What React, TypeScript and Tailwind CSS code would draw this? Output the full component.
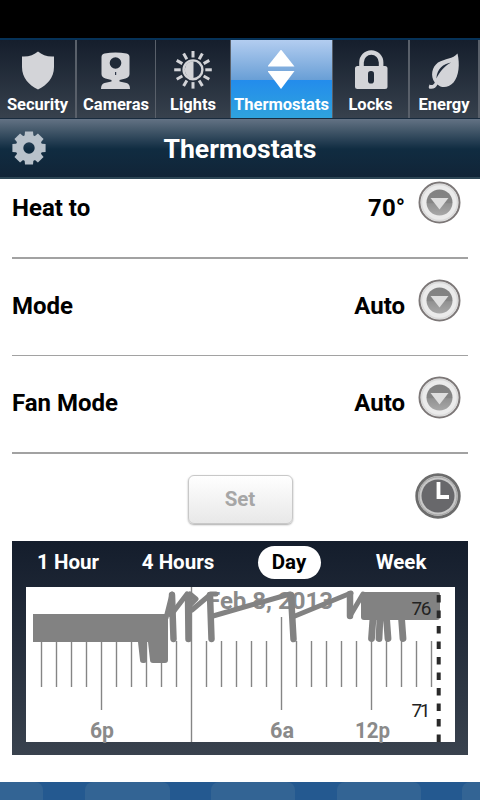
import React from 'react';
import { clsx } from 'clsx';

const ShieldIcon = () => (
  <svg width="34" height="40" viewBox="20 50 34 40" fill="#d3d4d8">
    <path d="M37 51.5C41 55 46.500 57 53 56.500V67C53 78 46 85 37 89.500C28 85 21 78 21 67V56.500C27.500 57 33 55 37 51.500Z" />
  </svg>
);

const CameraIcon = () => (
  <svg width="32" height="40" viewBox="99.500 50 32 40">
    <path d="M104 53.500Q115 51.500 126 53.500Q129 54 129 57V74Q129 77 125 78.500L119 80V81.500L126 83Q129.500 84 129.500 89H100.500Q100.500 84 104 83L111 81.500V80L105 78.500Q101 77 101 74V57Q101 54 104 53.500Z" fill="#d3d4d8" />
    <circle cx="115" cy="63" r="5.800" fill="#202a38" />
    <rect x="114.500" y="72" width="1.200" height="3" fill="#30394a" />
  </svg>
);

const rays = [0, 30, 60, 90, 120, 150, 180, 210, 240, 270, 300, 330];

const LightIcon = () => (
  <svg width="38" height="40" viewBox="174 50 38 40">
    {rays.map((r) => (
      <path key={r} d="M193 51V57.500" stroke="#d3d4d8" strokeWidth="3" transform={`rotate(${r} 193 69.800)`} />
    ))}
    <circle cx="193" cy="69.800" r="9.400" fill="#263142" stroke="#d3d4d8" strokeWidth="2.400" />
    <path d="M193.500 61V78.600A8.800 8.800 0 0 1 193.500 61Z" fill="#d3d4d8" />
  </svg>
);

const ArrowsIcon = () => (
  <svg width="28" height="40" viewBox="267.500 50 28 40" fill="#fff">
    <path d="M280.500 49.500L294 66.500H267Z" />
    <path d="M267 71H294L280.500 89Z" />
  </svg>
);

const LockIcon = () => (
  <svg width="34" height="40" viewBox="354 50 34 40">
    <path d="M361.500 68V62.500A9.800 10 0 0 1 381.100 62.500V68" fill="none" stroke="#d3d4d8" strokeWidth="4.600" />
    <rect x="355" y="66" width="32.500" height="23" rx="2.500" fill="#d3d4d8" />
    <rect x="368" y="71" width="6" height="12.500" rx="2.800" fill="#202a38" />
  </svg>
);

const LeafIcon = () => (
  <svg width="32" height="40" viewBox="428 50 32 40">
    <path d="M457.500 53.500C460 64 459 76 453.500 82.500C448 88.500 441 88 437.500 84.500C436 88 433 89.500 429 88.500Q428.500 86.500 429.500 84.500C432 86 434 84.500 434.800 82.500C430 76 432 67 438 62.500C445 58.500 453 59 457.500 53.500Z" fill="#d3d4d8" />
    <path d="M451 62.500C443 64 437.500 68 436.300 78.500C439 73 444 66 451 62.500Z" fill="#232e3e" />
  </svg>
);

const teeth = [0, 45, 90, 135, 180, 225, 270, 315];

const GearIcon = () => (
  <svg width="34" height="34" viewBox="-17 -17 34 34">
    {teeth.map((r) => (
      <path key={r} d="M-4.600 -10L-4 -16.600H4L4.600 -10Z" fill="#b9c2cb" transform={`rotate(${r})`} />
    ))}
    <circle r="9.500" fill="none" stroke="#b9c2cb" strokeWidth="7.600" />
  </svg>
);

const DropButton = () => (
  <svg width="43" height="43" viewBox="-21.500 -21.500 43 43">
    <defs>
      <linearGradient id="drop" x1="0" y1="0" x2="0" y2="1">
        <stop offset="0" stopColor="#818181" />
        <stop offset="0.500" stopColor="#858585" />
        <stop offset="0.550" stopColor="#929292" />
        <stop offset="1" stopColor="#a8a8a8" />
      </linearGradient>
    </defs>
    <circle r="20" fill="#ebebeb" stroke="#7c7777" strokeWidth="2" />
    <circle r="18" fill="none" stroke="#dadada" strokeWidth="1.500" />
    <circle r="13" fill="url(#drop)" />
    <path d="M-9 -4.500H9L0 7Z" fill="#dedede" />
  </svg>
);

const ClockIcon = () => (
  <svg width="46" height="46" viewBox="-23 -23 46 46">
    <circle r="21.300" fill="#c9c9c9" stroke="#6c6c6c" strokeWidth="2.800" />
    <circle r="19" fill="none" stroke="#a4a4a4" strokeWidth="1" />
    <circle r="16.500" fill="#68686b" />
    <path d="M0.500 -14V1H11" fill="none" stroke="#fff" strokeWidth="3.800" />
  </svg>
);

const tabs = [
  { label: 'Security', icon: ShieldIcon, width: 'w-[75px]' },
  { label: 'Cameras', icon: CameraIcon, width: 'w-[80px] border-l-2' },
  { label: 'Lights', icon: LightIcon, width: 'w-[75px] border-l' },
  { label: 'Thermostats', icon: ArrowsIcon, width: 'w-[102px] border-l', active: true },
  { label: 'Locks', icon: LockIcon, width: 'w-[76px] border-l' },
  { label: 'Energy', icon: LeafIcon, width: 'w-[72px] border-x-2' },
];

const settings = [
  { label: 'Heat to', value: '70°', row: 'h-[80px] pb-[18px] border-b-2' },
  { label: 'Mode', value: 'Auto', row: 'h-[97px] border-b' },
  { label: 'Fan Mode', value: 'Auto', row: 'h-[98px] border-b-2' },
];

const ranges = [
  { label: '1 Hour', pos: 'w-[112px]' },
  { label: '4 Hours', pos: 'w-[108px]' },
  { label: 'Day', pos: 'w-[114px]', active: true },
  { label: 'Week', pos: 'w-[110px]' },
];

const Chart = () => (
  <svg width="429" height="155" viewBox="26 587 429 155" className="block overflow-visible bg-white" fontFamily="Roboto, sans-serif">
    <g fill="#8a8a8a" fontSize="23" fontWeight="700">
      <text x="207" y="609" textLength="126" lengthAdjust="spacingAndGlyphs">Feb 8, 2013</text>
      <g fontSize="22">
        <text x="90" y="737.500" textLength="24" lengthAdjust="spacingAndGlyphs">6p</text>
        <text x="270" y="737.500" textLength="24" lengthAdjust="spacingAndGlyphs">6a</text>
        <text x="355" y="737.500" textLength="35" lengthAdjust="spacingAndGlyphs">12p</text>
      </g>
    </g>
    <g stroke="#858585" strokeWidth="1.400">
      {Array.from({ length: 27 }, (_, i) => {
        const x = 41.5 + i * 15;
        if (i === 10) return <path key={i} d={`M${x} 587V742`} />;
        if (i === 16) return <path key={i} d={`M${x} 617V710`} />;
        return <path key={i} d={`M${x} 641V${i === 4 || i === 22 ? 710 : 687}`} />;
      })}
    </g>
    <path d="M33 614H168V660Q168 663 165 663H153Q150 663 150 660L148 642H147V660Q147 663 144 663H143Q140 663 140 660L138 642H33Z" fill="#828282" />
    <g fill="none" stroke="#828282" strokeLinecap="round" strokeLinejoin="round">
      {/* sawtooth between the two solid blocks */}
      <path
        d="M166 618L172 594M171 615L187 594M192 610L211 594H216M190 594L196 599L190 605M213 616L290 594M295 616L351 593M350 616L363 594"
        strokeWidth="5"
      />
      <path d="M172 595L173.500 639M188 595L188.500 639M210 595L211.500 639M291 595L293.500 639M350 594V616" strokeWidth="6.500" />
      <path d="M373 618L371.500 638.500M380 618L379 638.500M386.500 618L388 638.500M401.500 618L403 638.500" strokeWidth="6.800" />
    </g>
    <path d="M364 592H438Q440 592 440 594V617Q440 620 437 620H364Q361 620 361 617V599Z" fill="#828282" />
    <path d="M438.700 595V742" stroke="#292929" strokeWidth="4" strokeDasharray="7.500 8" />
    <g fill="#222" fontSize="19" fontWeight="400">
      <text x="411.500" y="615" textLength="20">76</text>
      <text x="411.500" y="717" textLength="19">71</text>
    </g>
  </svg>
);

export default function App() {
  return (
    <div className="w-[480px] h-[800px] flex flex-col overflow-hidden bg-white font-[Roboto,sans-serif] font-bold text-black">
      <div className="h-[38px] shrink-0 bg-black" />

      <nav className="h-[80px] shrink-0 flex border-t-2 border-[#063258] bg-linear-to-b from-[#151e2c] to-[#37414d]">
        {tabs.map((tab) => (
          <button
            key={tab.label}
            className={clsx(
              'shrink-0 flex flex-col items-center border-[#59606a] pt-[10px] text-white',
              tab.width,
              tab.active && 'bg-[linear-gradient(#b3cdf0_0%,#699fd6_51%,#238cec_51%,#2fa3dd_100%)]'
            )}
          >
            <tab.icon />
            <span className="mt-[5px] text-[16.5px] leading-5 whitespace-nowrap">{tab.label}</span>
          </button>
        ))}
      </nav>

      <header className="h-[61px] shrink-0 grid grid-cols-[60px_1fr_60px] items-center border-t border-b-2 border-t-[#182b3e] border-b-[#2d4655] bg-[linear-gradient(#637284_0%,#465a6c_18%,#1f394e_42%,#102c41_52%,#112437_100%)]">
        <button className="pl-3">
          <GearIcon />
        </button>
        <h1 className="pt-[2px] text-center text-[26.6px] leading-8 text-white">Thermostats</h1>
      </header>

      <main className="px-3">
        {settings.map((item) => (
          <div key={item.label} className={clsx('flex items-center border-[#a2a2a2] text-[24px]', item.row)}>
            <span className="grow mb-[2px]">{item.label}</span>
            <span className="mr-[13px] mb-[2px]">{item.value}</span>
            <span className="mr-[7px] mb-[13px]">
              <DropButton />
            </span>
          </div>
        ))}

        <div className="h-[87px] grid grid-cols-3 items-center">
          <button className="col-start-2 justify-self-center w-[105px] h-[49px] mt-[4px] rounded-md border border-[#c8c8c8] bg-linear-to-b from-white to-[#e8e8e8] text-[20.5px] text-[#a6a6a6] shadow-[0_1px_2px_#aaa]">
            Set
          </button>
          <span className="justify-self-end mr-[7px] mb-[3px]">
            <ClockIcon />
          </span>
        </div>

        <section className="h-[214px] px-[14px] bg-linear-to-b from-[#141d2c] to-[#39424e]">
          <div className="-mx-[14px] h-[46px] flex items-center pb-[4px] text-[20.5px] text-white">
            {ranges.map((range) => (
              <button key={range.label} className={clsx('text-center', range.pos)}>
                <span className={clsx(range.active && 'inline-block w-[63px] h-[33px] leading-[33px] rounded-full bg-white text-black')}>
                  {range.label}
                </span>
              </button>
            ))}
          </div>
          <Chart />
        </section>
      </main>

      <footer className="mt-[27px] h-[18px] shrink-0 flex justify-between bg-[#245990]">
        <div className="w-[43px] rounded-tr-lg bg-[#336494]" />
        <div className="w-[85px] rounded-t-lg bg-[#336494]" />
        <div className="w-[84px] rounded-t-lg bg-[#336494]" />
        <div className="w-[84px] rounded-t-lg bg-[#336494]" />
        <div className="w-[18px] rounded-tl-lg bg-[#336494]" />
      </footer>
    </div>
  );
}
